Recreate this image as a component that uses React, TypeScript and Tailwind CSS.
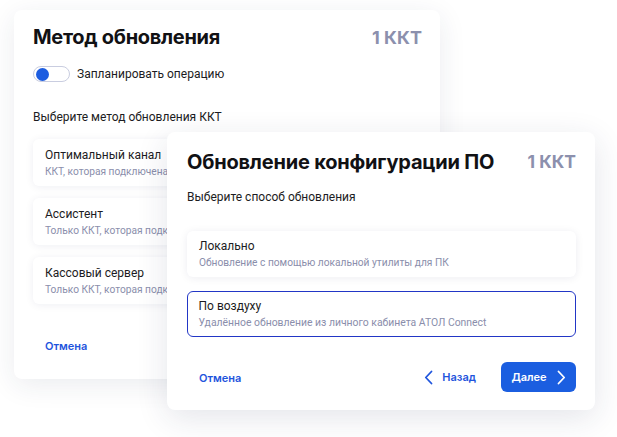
import React from "react";

const font = { fontFamily: "Inter, 'Noto Sans', sans-serif" };
const body = "font-['Roboto',sans-serif]";

function Chevron({ dir, className }: { dir: "left" | "right"; className?: string }) {
  return (
    <svg width="9" height="15" viewBox="0 0 9 15" fill="none" className={className}>
      {dir === "left" ? (
        <polyline points="7.5,1.5 1.8,7.5 7.5,13.5" stroke="currentColor" strokeWidth="1.8" strokeLinecap="round" strokeLinejoin="round" />
      ) : (
        <polyline points="1.5,1.5 7.2,7.5 1.5,13.5" stroke="currentColor" strokeWidth="1.8" strokeLinecap="round" strokeLinejoin="round" />
      )}
    </svg>
  );
}

function Item({ title, sub }: { title: string; sub: string }) {
  return (
    <div className="h-[47px] rounded-[6px] bg-white pl-[12px] pt-[7px] shadow-[0_1px_8px_rgba(20,30,80,0.07)] whitespace-nowrap">
      <div className={`${body} text-[12px] leading-[18px] text-[#1c1c22]`}>{title}</div>
      <div className={`${body} text-[10.2px] leading-[16px] text-[#8a8eab]`}>{sub}</div>
    </div>
  );
}

export default function App() {
  return (
    <div className="relative w-[617px] h-[437px] bg-white overflow-hidden" style={font}>
      {/* Card 1 */}
      <div className="ml-[14px] mt-[10px] w-[426px] h-[369px] rounded-[8px] bg-white shadow-[0_6px_28px_rgba(30,40,80,0.09)] px-[19px] pt-[13px]">
        <div className="flex items-center justify-between h-[28px]">
          <div className="text-[20px] font-bold text-[#111114] tracking-[-0.3px]">Метод обновления</div>
          <div className="text-[18px] font-bold text-[#8c90ad] mr-[-1px]">1 ККТ</div>
        </div>
        <div className="mt-[15px] flex items-center h-[16px]">
          <div className="w-[37px] h-[16px] rounded-full border border-[#c9cde0] bg-white flex items-center pl-[1.5px]">
            <div className="w-[13px] h-[13px] rounded-full bg-[#1d5de0]" />
          </div>
          <div className={`${body} ml-[7px] text-[12px] leading-[18px] text-[#1c1c22]`}>Запланировать операцию</div>
        </div>
        <div className={`${body} mt-[26px] text-[12px] leading-[18px] text-[#1c1c22]`}>Выберите метод обновления ККТ</div>
        <div className="mt-[13px] flex flex-col gap-[12px]">
          <Item title="Оптимальный канал" sub="ККТ, которая подключена к облаку АТОЛ Connect" />
          <Item title="Ассистент" sub="Только ККТ, которая подключена к ПК" />
          <Item title="Кассовый сервер" sub="Только ККТ, которая подключена к серверу" />
        </div>
        <div className="mt-[34px] pl-[12px] text-[11px] leading-[16px] font-semibold text-[#1f55dd]">Отмена</div>
      </div>

      {/* Card 2 */}
      <div className="absolute left-[167px] top-[132px] w-[428px] h-[278px] rounded-[8px] bg-white shadow-[0_8px_32px_rgba(30,40,80,0.12)] pl-[20px] pr-[19px] pt-[16px]">
        <div className="flex items-center justify-between h-[28px]">
          <div className="text-[20px] font-bold text-[#111114] tracking-[-0.2px]">Обновление конфигурации ПО</div>
          <div className="text-[17.5px] font-bold text-[#8c90ad]">1 ККТ</div>
        </div>
        <div className={`${body} mt-[12px] text-[12px] leading-[18px] text-[#1c1c22]`}>Выберите способ обновления</div>
        <div className="mt-[25px] h-[46px] rounded-[6px] bg-white pl-[12px] pt-[6px] shadow-[0_1px_8px_rgba(20,30,80,0.08)]">
          <div className={`${body} text-[12px] leading-[18px] text-[#1c1c22]`}>Локально</div>
          <div className={`${body} text-[10.2px] leading-[16px] text-[#8a8eab]`}>Обновление с помощью локальной утилиты для ПК</div>
        </div>
        <div className="mt-[14px] h-[46px] rounded-[6px] bg-white border-[1.5px] border-[#2236c6] pl-[10.5px] pt-[4.5px]">
          <div className={`${body} text-[12px] leading-[18px] text-[#1c1c22]`}>По воздуху</div>
          <div className={`${body} text-[10.4px] leading-[16px] text-[#8a8eab]`}>Удалённое обновление из личного кабинета АТОЛ Connect</div>
        </div>
        <div className="mt-[25px] flex items-center h-[30px]">
          <div className="pl-[12px] text-[11px] font-semibold text-[#1f55dd] mt-[2px]">Отмена</div>
          <div className="ml-auto flex items-center text-[#1f55dd]">
            <Chevron dir="left" />
            <span className="ml-[9px] text-[11px] font-semibold">Назад</span>
          </div>
          <div className="ml-[25px] w-[75px] h-[30px] rounded-[6px] bg-[#1b5ee0] flex items-center justify-center gap-[10px] text-white">
            <span className="text-[11px] font-semibold">Далее</span>
            <Chevron dir="right" />
          </div>
        </div>
      </div>
    </div>
  );
}
